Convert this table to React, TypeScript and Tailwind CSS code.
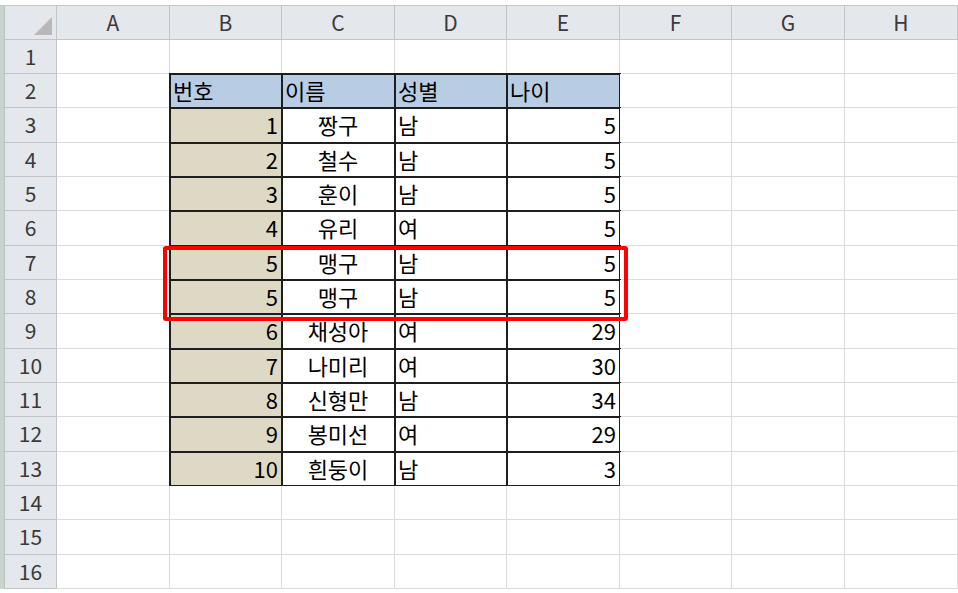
import React from "react";

const COLS = ["A", "B", "C", "D", "E", "F", "G", "H"];
const COL_W = [113, 112, 113, 112, 113, 112, 113, 113];
const ROW_H = [34, 34, 35, 34, 34, 35, 34, 34, 35, 34, 34, 35, 34, 34, 35, 34];

// B2:E13 table contents
const people: [string, string, string, string][] = [
  ["1", "짱구", "남", "5"],
  ["2", "철수", "남", "5"],
  ["3", "훈이", "남", "5"],
  ["4", "유리", "여", "5"],
  ["5", "맹구", "남", "5"],
  ["5", "맹구", "남", "5"],
  ["6", "채성아", "여", "29"],
  ["7", "나미리", "여", "30"],
  ["8", "신형만", "남", "34"],
  ["9", "봉미선", "여", "29"],
  ["10", "흰둥이", "남", "3"],
];

function cellContent(row: number, col: number) {
  // col: 0 = A ... 7 = H
  if (col < 1 || col > 4) return null;
  if (row === 2) {
    const head = ["번호", "이름", "성별", "나이"][col - 1];
    return { text: head, cls: "justify-start pl-[3px] bg-[#b8cce4]" };
  }
  if (row >= 3 && row <= 13) {
    const v = people[row - 3][col - 1];
    if (col === 1) return { text: v, cls: "justify-end pr-[3px] bg-[#ddd9c4]" };
    if (col === 2) return { text: v, cls: "justify-center bg-white" };
    if (col === 3) return { text: v, cls: "justify-start pl-[3px] bg-white" };
    return { text: v, cls: "justify-end pr-[3px] bg-white" };
  }
  return null;
}

export default function App() {
  return (
    <div
      className="relative w-[958px] h-[593px] overflow-hidden bg-white text-black"
      style={{ fontFamily: '"Noto Sans CJK KR", "Noto Sans", sans-serif' }}
    >
      {/* formula bar edge */}
      <div className="h-[6px] bg-white border-b border-[#c3c7cb]" />

      <div className="flex">
        {/* left window edge */}
        <div className="w-[5px] bg-[#c9d2cc] border-r border-[#b9c2bc] shrink-0" />

        <div
          className="grid"
          style={{
            gridTemplateColumns: `52px ${COL_W.map((w) => `${w}px`).join(" ")}`,
            gridTemplateRows: `34px ${ROW_H.map((h) => `${h}px`).join(" ")}`,
          }}
        >
          {/* corner */}
          <div className="relative bg-[#e4e7eb] border-r border-b border-[#c0c4c8]">
            <div className="absolute right-[4px] bottom-[4px] w-0 h-0 border-l-[18px] border-l-transparent border-b-[18px] border-b-[#b8b8b8]" />
          </div>
          {COLS.map((c) => (
            <div
              key={c}
              className="flex items-center justify-center bg-[#e4e7eb] border-r border-b border-[#c0c4c8] text-[21px] text-[#3a3a3a]"
            >
              {c}
            </div>
          ))}

          {ROW_H.map((_, ri) => {
            const row = ri + 1;
            return (
              <React.Fragment key={row}>
                <div className="flex items-center justify-center bg-[#e4e7eb] border-r border-b border-[#c0c4c8] text-[21px] text-[#3a3a3a]">
                  {row}
                </div>
                {COLS.map((c, ci) => {
                  const content = cellContent(row, ci);
                  if (!content) {
                    return <div key={c} className="border-r border-b border-[#dadcdd] bg-white" />;
                  }
                  return (
                    <div
                      key={c}
                      className={`flex items-center pb-[2px] text-[22px] leading-none border-r border-b border-[#dadcdd] outline-2 outline-[#1e1e1e] -outline-offset-1 ${content.cls}`}
                    >
                      {content.text}
                    </div>
                  );
                })}
              </React.Fragment>
            );
          })}
        </div>
      </div>

      {/* highlight on duplicated rows 7-8 */}
      <div className="absolute left-[163px] top-[246px] w-[465px] h-[75px] border-4 border-[#ff0000] rounded-[3px] pointer-events-none" />
    </div>
  );
}
